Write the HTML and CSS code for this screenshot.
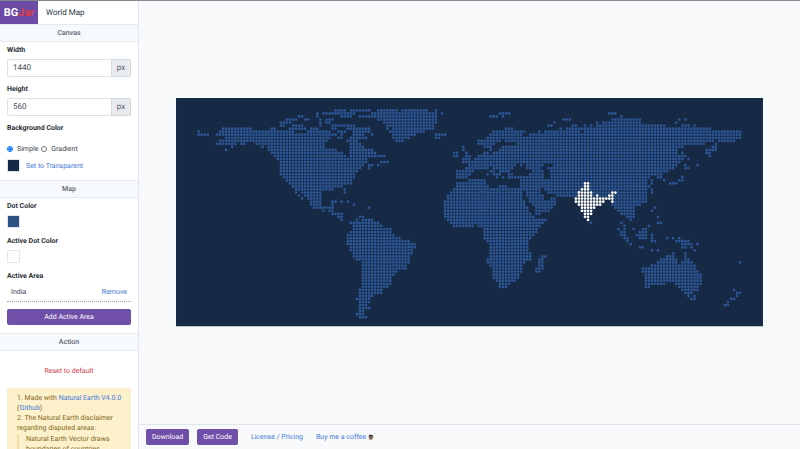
FILE: index.html
```html
<!DOCTYPE html>
<html lang="en">
<head>
<meta charset="utf-8">
<title>World Map - BGJar</title>
<link rel="stylesheet" href="styles.css">
</head>
<body>
<aside class="sidebar">
  <header class="brand">
    <a class="logo" href="#"><span>BG</span><span class="logo-accent">Jar</span></a>
    <h1 class="page-title">World Map</h1>
  </header>
  <h2 class="section-title">Canvas</h2>
  <section class="panel">
    <label class="label" for="width">Width</label>
    <div class="field"><input class="field-input" id="width" type="text" value="1440"><span class="unit">px</span></div>
    <label class="label" for="height">Height</label>
    <div class="field"><input class="field-input" id="height" type="text" value="560"><span class="unit">px</span></div>
    <p class="label">Background Color</p>
    <div class="radios">
      <input class="radio" type="radio" name="fill" id="simple" checked><label for="simple">Simple</label>
      <input class="radio" type="radio" name="fill" id="gradient"><label for="gradient">Gradient</label>
    </div>
    <div class="color-row">
      <button class="swatch swatch-navy" type="button" aria-label="Background color"></button>
      <a class="link" href="#">Set to Transparent</a>
    </div>
  </section>
  <h2 class="section-title">Map</h2>
  <section class="panel">
    <p class="label">Dot Color</p>
    <button class="swatch swatch-blue" type="button" aria-label="Dot color"></button>
    <p class="label">Active Dot Color</p>
    <button class="swatch swatch-white" type="button" aria-label="Active dot color"></button>
    <p class="label">Active Area</p>
    <div class="area"><span>India</span><a class="link" href="#">Remove</a></div>
    <button class="button button-wide" type="button">Add Active Area</button>
  </section>
  <h2 class="section-title">Action</h2>
  <section class="panel">
    <button class="reset" type="button">Reset to default</button>
    <div class="note">
      <p>1. Made with <a class="link" href="#">Natural Earth V4.0.0</a> (<a class="link" href="#">Github</a>)</p>
      <p>2. The Natural Earth disclaimer regarding disputed areas:</p>
      <blockquote class="quote">Natural Earth Vector draws boundaries of countries</blockquote>
    </div>
  </section>
</aside>
<main class="main">
  <div class="stage">
    <svg class="map" id="map" viewBox="0 0 1440 560" role="img" aria-label="Dotted world map">
      <rect class="sea" width="1440" height="560"/>
      <path class="land" id="land"/>
      <path class="active" id="active"/>
    </svg>
  </div>
  <footer class="toolbar">
    <button class="button" type="button">Download</button>
    <button class="button" type="button">Get Code</button>
    <a class="link" href="#">License / Pricing</a>
    <a class="link coffee" href="#">Buy me a coffee<svg class="cup" viewBox="0 0 12 12" aria-hidden="true"><path d="M1 10h9l-1 1.500H2z" fill="#b5ada5"/><path d="M1.500 3h8v4.500a3 3 0 0 1-3 3h-2a3 3 0 0 1-3-3z" fill="#7a6a5c"/><ellipse cx="5.500" cy="3" rx="4" ry="1.700" fill="#35251b"/><path d="M9.500 4.500c2.500-.5 2.500 3-.5 3.500" fill="none" stroke="#7a6a5c"/></svg></a>
  </footer>
</main>
<script src="map.js"></script>
</body>
</html>
```
FILE: styles.css
```css
* { box-sizing: border-box; }
body {
  margin: 0;
  height: 100vh;
  display: flex;
  overflow: hidden;
  border-top: 1px solid #85888f;
  font: 7px/10px Roboto, sans-serif;
  text-rendering: geometricPrecision;
  color: #3c4250;
  background: #f8fafc;
}
h1, h2, p, blockquote { margin: 0; }
button, input { font: inherit; text-rendering: inherit; }
.link { color: #4178d8; text-decoration: none; }

.sidebar {
  flex: 0 0 139px;
  overflow: hidden;
  background: #fff;
  border-right: 1px solid #e2e6ec;
}
.brand { display: flex; align-items: center; height: 23px; }
.logo {
  display: flex;
  align-items: center;
  justify-content: center;
  width: 38px;
  height: 23px;
  background: #6b4ba6;
  color: #fff;
  font-size: 11px;
  font-weight: 700;
  text-decoration: none;
}
.logo-accent { color: #dc3d45; }
.page-title { margin-left: 8px; font-size: 8px; font-weight: 400; color: #2d3748; }
.section-title {
  padding: 4px 0;
  border: solid #e6eaf0;
  border-width: 1px 0;
  background: #f7fafc;
  font-size: 7px;
  line-height: 8px;
  font-weight: 500;
  text-align: center;
  color: #5d6571;
}
.panel { padding: 2px 7px 8px; }
.label { display: block; padding: 2px 0; margin-bottom: 3px; font-weight: 700; line-height: 8px; color: #2a2f38; }
.field { display: flex; height: 18px; margin-bottom: 6px; }
.field-input {
  flex: 1;
  min-width: 0;
  padding: 0 5px;
  border: 1px solid #dde1e6;
  border-right: 0;
  border-radius: 2px 0 0 2px;
  font-size: 8px;
  color: #495057;
}
.unit {
  display: flex;
  align-items: center;
  justify-content: center;
  width: 20px;
  border: 1px solid #d5d9de;
  border-radius: 0 2px 2px 0;
  background: #e9ecef;
  font-size: 8px;
  color: #59616b;
}
.radios { display: flex; align-items: center; gap: 3px; padding-top: 7px; margin-bottom: 5px; }
.radio { width: 6px; height: 6px; margin: 0 1px 0 0; }
.color-row { display: flex; align-items: center; gap: 6px; }
.swatch { display: block; width: 13px; height: 13px; padding: 0; border: 1px solid #e2e6ec; border-radius: 1px; }
.swatch-navy { background: #172a45; }
.swatch-blue { background: #2c5282; }
.swatch-white { background: #fff; }
.swatch + .label { margin-top: 7px; }
.area {
  display: flex;
  justify-content: space-between;
  padding: 2px 4px 4px;
  margin-bottom: 7px;
  border-bottom: 1px dotted #9a9fae;
}
.button {
  padding: 0 6px;
  height: 16px;
  border: 0;
  border-radius: 2px;
  background: #6f4fa8;
  color: #fff;
}
.button-wide { display: block; width: 100%; }
.reset { display: block; margin: 13px auto 12px; padding: 0; border: 0; background: none; color: #cc3b4b; }
.note { padding: 5px 4px 5px 10px; border-radius: 2px; background: #fdf1cc; color: #81671c; }
.quote { margin-top: 1px; padding-left: 7px; border-left: 2px solid #f6d8a2; }

.main { flex: 1; min-width: 0; display: flex; flex-direction: column; }
.stage { flex: 1; min-height: 0; display: flex; align-items: center; padding: 0 37px; }
.map { display: block; width: 100%; }
.sea { fill: #172a45; }
.land { fill: #2c5594; }
.active { fill: #fff; }
.toolbar { display: flex; align-items: center; height: 25px; padding: 0 7px; border-top: 1px solid #e2e6ec; }
.toolbar .button + .button { margin-left: 8px; }
.toolbar .link { margin-left: 13px; }
.coffee { display: flex; align-items: center; gap: 2px; }
.cup { width: 6px; height: 6px; }
```
FILE: map.js
```js
// Each entry is one row of dots, given as runs of grid columns.
const landRows = [
  "45-48 50-56 59-65 67-75 78",
  "39 41-51 57-78 80 99-102 135-137",
  "33-34 39 47-50 53-78 96-98 100 139",
  "29-32 35-36 40 42-44 59-78 120-122 136-145 158 160",
  "27-30 40 42-43 61-78 117 131 133-145 157",
  "27-28 31-34 40 44-51 62-77 115-116 123-124 127 129 131-153 159-161 163",
  "8-17 24-25 30-35 37-39 44-45 49-56 62 64-77 101-103 119 121-168",
  "0 7-31 36-43 46-48 51-56 63-74 97-107 112 114-125 127-178",
  "0-3 6-45 47 51-54 57 64-71 78-81 96-106 109-178",
  "9-43 46-47 50-55 64-69 78-79 95-178",
  "7-42 49-52 65-67 92-99 101-169 171-176",
  "6-12 14-15 19-41 50-53 92-97 105-166 170",
  "11 21 23-41 50-54 87 94-96 100-159 169-170",
  "9 23-45 50-57 87 96 99-157 167-170",
  "24-47 50-58 84-85 88 94-95 97-157 159 167-168",
  "25-48 50-61 84-85 88-89 92-160 168",
  "26-55 87-89 91-159 161",
  "27-55 60-62 87-158",
  "27-54 56-57 59 89-104 106 108-113 117-157 160 164",
  "27-53 56 88-95 97-103 108-112 115-156 160-161",
  "27-52 85-90 96-97 99-102 110-113 116-154",
  "27-51 85-89 95 97-99 102-103 109-113 116-152",
  "28-51 85-88 98 100 102-113 116-148 151-152 159",
  "29-50 89-94 106-147 149 153 158-159",
  "30-50 85-94 106-147 149 155-157",
  "31-47 85-95 99-101 106-148",
  "32-44 48 84-112 114-147 149",
  "32 34-40 48 83-106 108-112 115-147 149",
  "33 35-40 82-106 108-113 118-147",
  "34 36-40 82-106 109-113 116-117 137-147",
  "37-40 44-45 47 49 81-107 109-117 136-147",
  "37-40 44 51 81-107 110-117 136-145",
  "38-44 56 81-108 111-116 137-143 150",
  "41 43-44 81-108 111-115 138-143 149",
  "44-47 81-109 111-112 139-143",
  "46-47 53-54 81-110 141-143 151",
  "47 52 54-57 82-114 142",
  "50-59 83-113 129 139 151-152",
  "51-60 84-90 92-112 140 148",
  "51-63 94-111 138 140 143 146-147",
  "50-63 94-111 139-140 145-147",
  "49-64 94-110 139-140 144-147 149",
  "49-66 94-109 140-141 145-147 149 154 156 158",
  "49-69 95-108 141 149-150 157-161",
  "49-71 96-108 142 159-162 164",
  "50-71 96-108 145-146 159-160 162",
  "50-70 96-108 149 151 163",
  "51-70 96-109 156 160",
  "51-69 96-109 113-114 154-156 160",
  "52-69 95-109 112-113 152-157 160-161",
  "54-69 95-107 112-113 151-157 159-162 178",
  "54-68 96-106 112-113 149-163",
  "54-68 97-106 111-113 146-163",
  "54-65 97-106 111-112 146-164",
  "54-64 97-105 147-165",
  "54-63 97-105 147-165",
  "54-63 98-104 147-165",
  "54-63 99-102 147-153 157-165",
  "54-62 99-101 147-148 158-164",
  "53-60 159-164 176",
  "53-60 160-162 177-178",
  "53-57 161 163 177",
  "52-56 162-163 175-176",
  "53-56 174",
  "53-55 173-174",
  "53-56",
  "53-54",
  "52-54",
  "53-55"
];
const activeRows = {
  24: "127-128",
  25: "127-128",
  26: "126-128",
  27: "125-129 136-137",
  28: "125-129 131 135-136",
  29: "124-136",
  30: "124-133 136",
  31: "125-132",
  32: "126-130",
  33: "126-129",
  34: "127-129",
  35: "127-128",
  36: "128"
};
const STEP = 7.462, LEFT = 55.7, TOP = 30.4, RADIUS = 3.4;

function columns(runs) {
  return (runs || "").split(" ").filter(Boolean).flatMap(run => {
    const [from, to = from] = run.split("-").map(Number);
    return Array.from({ length: to - from + 1 }, (_, i) => from + i);
  });
}
function dot(col, row) {
  const x = LEFT + col * STEP - RADIUS, y = TOP + row * STEP;
  return `M${x} ${y}a${RADIUS} ${RADIUS} 0 1 0 ${2 * RADIUS} 0a${RADIUS} ${RADIUS} 0 1 0 ${-2 * RADIUS} 0`;
}
let land = "", active = "";
landRows.forEach((runs, row) => {
  const lit = new Set(columns(activeRows[row]));
  columns(runs).filter(c => !lit.has(c)).forEach(c => { land += dot(c, row); });
  lit.forEach(c => { active += dot(c, row); });
});
document.getElementById("land").setAttribute("d", land);
document.getElementById("active").setAttribute("d", active);
```
